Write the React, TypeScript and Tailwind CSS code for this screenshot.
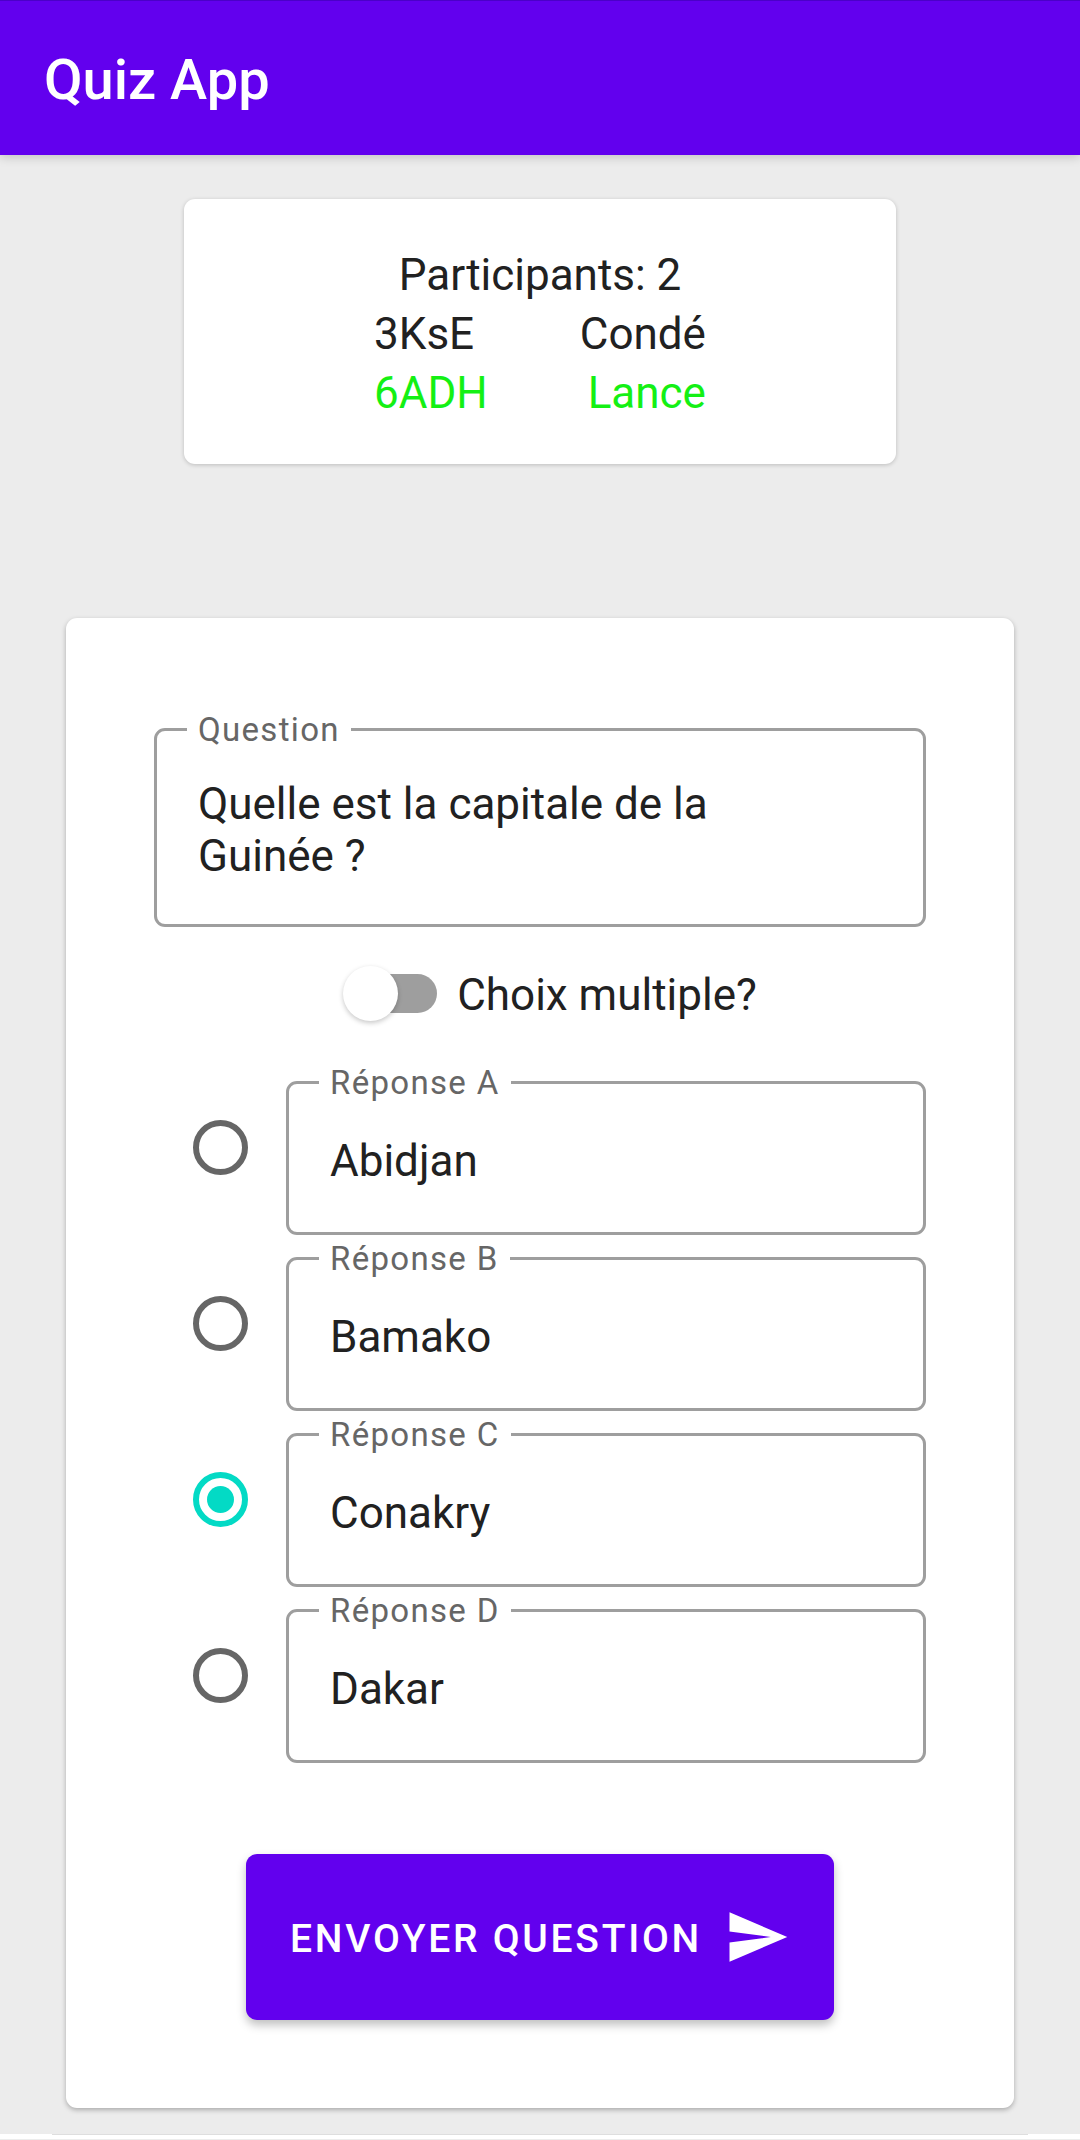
import { useState } from "react";

const participants = [
  { id: "3KsE", name: "Condé", active: false },
  { id: "6ADH", name: "Lance", active: true },
];

const initialAnswers = [
  { key: "A", text: "Abidjan" },
  { key: "B", text: "Bamako" },
  { key: "C", text: "Conakry" },
  { key: "D", text: "Dakar" },
];

const labelClass =
  "absolute -top-5 left-[30px] bg-white px-[11px] text-[33px] leading-[38px] tracking-[0.04em] text-[#666666]";

function SendIcon() {
  return (
    <svg className="size-[66px] shrink-0" viewBox="0 0 24 24" fill="currentColor" aria-hidden="true">
      <path d="M2.01 21L23 12 2.01 3 2 10l15 2-15 2z" />
    </svg>
  );
}

function AnswerRow({
  letter,
  value,
  checked,
  onChange,
  onSelect,
}: {
  letter: string;
  value: string;
  checked: boolean;
  onChange: (v: string) => void;
  onSelect: () => void;
}) {
  const id = `answer-${letter}`;
  return (
    <div className="flex items-center pt-[22px] pl-[39px]">
      <input
        type="radio"
        name="correct"
        aria-label={`Réponse ${letter} correcte`}
        checked={checked}
        onChange={onSelect}
        className="mr-[38px] -mt-[22px] grid size-[55px] shrink-0 appearance-none place-items-center rounded-full border-6 border-[#666666] before:size-[27px] before:rounded-full checked:border-[#03dac5] checked:before:bg-[#03dac5]"
      />
      <div className="relative min-w-0 flex-1 rounded-[11px] border-3 border-[#9e9e9e]">
        <label htmlFor={id} className={labelClass}>
          Réponse {letter}
        </label>
        <input
          id={id}
          type="text"
          value={value}
          onChange={(e) => onChange(e.target.value)}
          className="block w-full bg-transparent px-[41px] pt-[51px] pb-[45px] leading-[52px] outline-none"
        />
      </div>
    </div>
  );
}

export default function App() {
  const [question, setQuestion] = useState("Quelle est la capitale de la\nGuinée ?");
  const [answers, setAnswers] = useState(initialAnswers);
  const [correct, setCorrect] = useState("C");
  const [multiple, setMultiple] = useState(false);

  return (
    <div className="min-h-screen bg-[#ececec] font-['Roboto',sans-serif] text-[44px] leading-[52px] text-[#212121]">
      <header className="flex h-[155px] items-center border-t border-[#4b00c8] bg-[#6200ee] px-11 pt-1 shadow-[0_2px_10px_rgba(0,0,0,0.18)]">
        <h1 className="text-[56px] leading-[64px] font-medium text-white">Quiz App</h1>
      </header>

      <main className="px-[66px] pt-11 pb-[26px]">
        <section className="mx-[118px] flex flex-col items-center rounded-[11px] bg-white pt-[47px] pb-[41px] leading-[59px] shadow-[0_1px_4px_rgba(0,0,0,0.2)]">
          <h2>Participants: 2</h2>
          <table>
            <tbody>
              {participants.map((p) => (
                <tr key={p.id} className={p.active ? "text-[#14f014]" : ""}>
                  <td className="p-0 pr-[92px]">{p.id}</td>
                  <td className="p-0 text-right">{p.name}</td>
                </tr>
              ))}
            </tbody>
          </table>
        </section>

        <form
          onSubmit={(e) => e.preventDefault()}
          className="mt-[154px] rounded-[11px] bg-white px-[88px] pt-[110px] pb-[88px] shadow-[0_2px_5px_rgba(0,0,0,0.28)]"
        >
          <div className="relative rounded-[11px] border-3 border-[#9e9e9e]">
            <label htmlFor="question" className={labelClass}>
              Question
            </label>
            <textarea
              id="question"
              rows={2}
              value={question}
              onChange={(e) => setQuestion(e.target.value)}
              className="block w-full resize-none overflow-hidden bg-transparent px-[41px] pt-[47px] pb-[42px] leading-[52px] outline-none"
            />
          </div>

          <div className="flex h-[132px] items-center justify-center gap-5 pl-5">
            <input
              id="multiple"
              type="checkbox"
              role="switch"
              checked={multiple}
              onChange={(e) => setMultiple(e.target.checked)}
              className="flex h-[39px] w-[94px] appearance-none items-center rounded-full bg-[linear-gradient(#9e9e9e,#9e9e9e)] bg-size-[72px_39px] bg-right bg-no-repeat before:size-[55px] before:shrink-0 before:rounded-full before:bg-white before:shadow-[0_2px_5px_rgba(0,0,0,0.22)] checked:justify-end"
            />
            <label htmlFor="multiple" className="pt-1">
              Choix multiple?
            </label>
          </div>

          {answers.map((a) => (
            <AnswerRow
              key={a.key}
              letter={a.key}
              value={a.text}
              checked={correct === a.key}
              onSelect={() => setCorrect(a.key)}
              onChange={(text) => setAnswers(answers.map((o) => (o.key === a.key ? { ...o, text } : o)))}
            />
          ))}

          <button
            type="submit"
            className="mx-auto mt-[91px] flex h-[166px] items-center gap-[22px] rounded-[11px] bg-[#6200ee] px-11 text-[39px] leading-[46px] font-medium tracking-[0.07em] text-white uppercase shadow-[0_5px_10px_rgba(0,0,0,0.25)]"
          >
            <span className="pt-1">Envoyer question</span>
            <SendIcon />
          </button>
        </form>
      </main>

      <footer className="bg-white pb-1">
        <div className="mx-[52px] border-t border-[#dedede]" />
      </footer>
    </div>
  );
}
